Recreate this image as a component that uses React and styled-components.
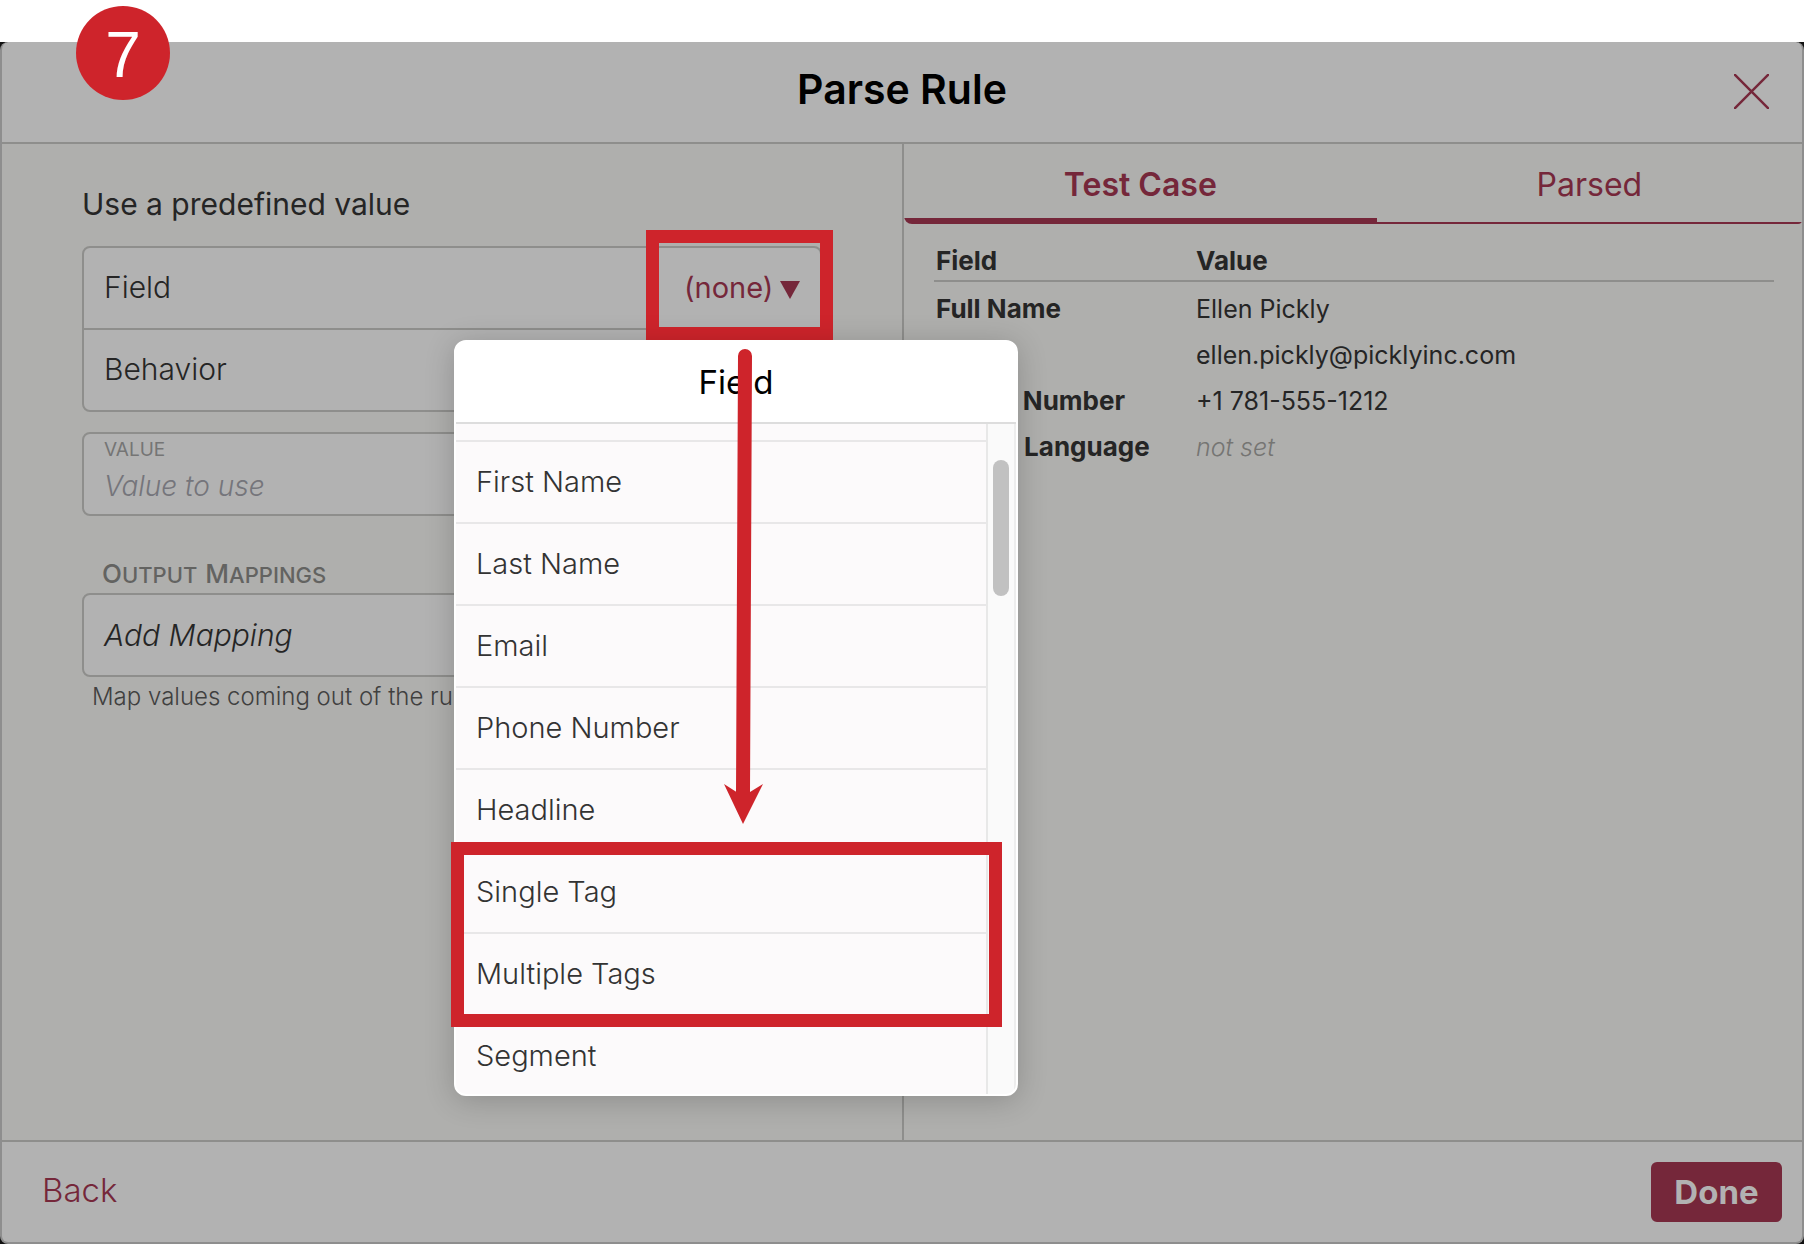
import React, { useState } from 'react'
import styled, { createGlobalStyle } from 'styled-components'

const GlobalStyle = createGlobalStyle`
  * {
    box-sizing: border-box;
  }
  body {
    margin: 0;
    background-color: white;
    color: #252525;
    font-family: Inter, "Open Sans", sans-serif;
    font-size: 29px;
  }
  button, input, select {
    font: inherit;
    color: inherit;
    margin: 0;
    padding: 0;
    border: none;
    background: none;
  }
  button {
    cursor: pointer;
  }
`

const Page = styled.div`
  position: relative;
  min-height: 100vh;
  padding-top: 42px;
  display: flex;
  flex-direction: column;
`

const Backdrop = styled.div`
  flex: 1;
  display: flex;
  background-color: #111;
`

const Dialog = styled.main`
  flex: 1;
  display: flex;
  flex-direction: column;
  border: 2px solid #8e8e8e;
  border-top: none;
  border-radius: 8px;
  background-color: #b2b2b2;
`

const Header = styled.header`
  height: 102px;
  padding: 0 33px 6px;
  display: grid;
  grid-template-columns: 1fr auto 1fr;
  align-items: center;
  border-bottom: 2px solid #8e8e8c;
`

const Title = styled.h1`
  grid-column: 2;
  margin: 0;
  font-size: 41px;
  font-weight: 600;
  color: black;
`

const CloseButton = styled.button`
  justify-self: end;
  display: flex;
  padding-top: 4px;
`

const Content = styled.div`
  flex: 1;
  display: grid;
  grid-template-columns: 1fr 1fr;
  background-color: #afafad;
`

const Left = styled.section`
  padding: 40px 80px;
`

const Right = styled.section`
  border-left: 2px solid #8e8e8c;
`

const GroupTitle = styled.h2`
  margin: 0 0 22px;
  font-size: 30px;
  line-height: 40px;
  font-weight: 400;
`

const Box = styled.div`
  margin-bottom: 20px;
  border: 2px solid #8e8e8c;
  border-radius: 8px;
  background-color: #b2b2b2;
`

const Row = styled.div`
  height: 80px;
  padding-left: 20px;
  display: flex;
  justify-content: space-between;
  align-items: stretch;
  font-size: 30px;
  font-weight: 300;

  & + & {
    height: 82px;
    border-top: 2px solid #8e8e8c;
  }
`

const RowLabel = styled.label`
  display: flex;
  align-items: center;
  padding-bottom: 2px;
`

const Picker = styled.div`
  position: relative;
  display: flex;
  align-items: center;
  gap: 8px;
  padding: 2px 20px 2px 26px;
  color: #75273a;
  font-size: 29px;
`

const PickerSelect = styled.select`
  width: 88px;
  appearance: none;
  font-weight: 400;
  line-height: 40px;
`

const Caret = styled.svg`
  margin-top: 4px;
`

const TextField = styled.div`
  height: 80px;
  padding: 4px 20px;
  display: flex;
  flex-direction: column;
  gap: 4px;
`

const TextFieldLabel = styled.label`
  font-size: 19px;
  line-height: 24px;
  color: #757575;
  text-transform: uppercase;
`

const TextInput = styled.input`
  height: 40px;
  width: 100%;
  font-size: 28px;
  font-weight: 300;

  &::placeholder {
    color: #75757b;
    font-style: italic;
    opacity: 1;
  }
`

const SectionTitle = styled.h3`
  margin: 42px 0 2px;
  padding-left: 20px;
  display: flex;
  gap: 8px;
  align-items: baseline;
  font-size: 22px;
  line-height: 32px;
  font-weight: 500;
  color: #636361;
  text-transform: uppercase;
`

const Word = styled.span`
  display: block;

  &::first-letter {
    font-size: 26px;
  }
`

const AddButton = styled.button`
  width: 100%;
  height: 80px;
  padding: 0 20px;
  display: block;
  text-align: left;
  font-size: 30px;
  font-style: italic;
  font-weight: 300;
`

const Help = styled.p`
  margin: -14px 0 0;
  padding-left: 10px;
  font-size: 24px;
  line-height: 28px;
  font-weight: 300;
  color: #40403f;
`

const Tabs = styled.div`
  display: flex;
  height: 80px;
  border-radius: 0 0 4px 8px;
  overflow: hidden;
`

const Tab = styled.button`
  flex: 1 1 auto;
  padding-top: ${(props) => (props.$active ? 6 : 2)}px;
  border-bottom: ${(props) => (props.$active ? 6 : 2)}px solid #75273a;
  color: #75273a;
  font-size: 32px;
  font-weight: ${(props) => (props.$active ? 600 : 400)};
`

const TableWrap = styled.div`
  padding: 0 28px 0 30px;
`

const Table = styled.table`
  width: 100%;
  border-collapse: separate;
  border-spacing: 0;
  table-layout: fixed;
  font-size: 25px;

  th, td {
    height: 46px;
    padding: 0 0 0 2px;
    line-height: 30px;
    text-align: left;
    white-space: nowrap;
  }
  th {
    font-size: 26px;
    font-weight: 700;
  }
  thead th {
    height: 58px;
    padding-bottom: 4px;
    vertical-align: bottom;
    border-bottom: 2px solid #8e8e8c;
  }
  th:first-child {
    width: 260px;
  }
  tbody::before {
    content: "";
    display: block;
    height: 4px;
  }
`

const NotSet = styled.i`
  font-weight: 300;
  color: #757573;
`

const Footer = styled.footer`
  height: 102px;
  padding: 0 20px 0 40px;
  display: flex;
  align-items: center;
  justify-content: space-between;
  border-top: 2px solid #8e8e8c;
`

const BackButton = styled.button`
  padding-bottom: 4px;
  font-size: 33px;
  font-weight: 300;
  color: #75273a;
`

const DoneButton = styled.button`
  width: 131px;
  height: 60px;
  border-radius: 6px;
  background-color: #75273a;
  color: #b2b2b2;
  font-size: 33px;
  font-weight: 700;
`

const Popover = styled.div`
  position: absolute;
  z-index: 1;
  top: calc(100% + 12px);
  right: -198px;
  width: 564px;
  border: 2px solid white;
  border-radius: 12px;
  background-color: white;
  box-shadow: 0 4px 30px rgba(0, 0, 0, 0.2);
  color: #333;
`

const PopoverTitle = styled.h2`
  margin: 0;
  height: 82px;
  line-height: 80px;
  border-bottom: 2px solid #ddd;
  color: black;
  font-size: 33px;
  font-weight: 400;
  text-align: center;
`

const Scroller = styled.div`
  height: 670px;
  display: flex;
  overflow: hidden;
  border-radius: 0 0 10px 10px;
`

const OptionList = styled.ul`
  flex: 1;
  margin: 0;
  padding: 16px 0 0;
  list-style: none;
  background-color: #fcfafb;
`

const Option = styled.li`
  height: 82px;
  padding-left: 20px;
  line-height: 80px;
  font-weight: 300;
  border-top: 2px solid #e8e7e8;
`

const ScrollTrack = styled.div`
  width: 30px;
  padding: 36px 5px;
  border-left: 2px solid #e8e8e8;
  border-right: 2px solid #ededed;
  background-color: #fafafa;
`

const ScrollThumb = styled.div`
  height: 136px;
  border-radius: 8px;
  background-color: #c1c1c1;
`

// annotations drawn over the dialog
const Highlight = styled.div`
  position: absolute;
  border: 13px solid #ce242b;
  pointer-events: none;
`

const PickerHighlight = styled(Highlight)`
  inset: -18px -13px -12px -12px;
`

const TagsHighlight = styled(Highlight)`
  top: 500px;
  right: 14px;
  left: -5px;
  height: 185px;
`

const Arrow = styled.svg`
  position: absolute;
  top: 6px;
  left: 268px;
  pointer-events: none;
`

const Step = styled.div`
  position: absolute;
  z-index: 2;
  top: 6px;
  left: 76px;
  width: 94px;
  height: 94px;
  border-radius: 50%;
  background-color: #ce242b;
  color: white;
  font-family: "Liberation Sans", Arial, sans-serif;
  font-size: 64px;
  line-height: 98px;
  text-align: center;
`

const fields = [
  'First Name',
  'Last Name',
  'Email',
  'Phone Number',
  'Headline',
  'Single Tag',
  'Multiple Tags',
  'Segment',
]

const testCase = [
  { field: 'Full Name', value: 'Ellen Pickly' },
  { field: 'Email', value: 'ellen.pickly@picklyinc.com' },
  { field: 'Phone Number', value: '+1 781-555-1212' },
  { field: 'Target Language', value: null },
]

const FieldPopover = ({ onPick }) => {
  return (
    <Popover>
      <PopoverTitle>Field</PopoverTitle>
      <Scroller>
        <OptionList role="listbox" aria-label="Field">
          {fields.map((name) => (
            <Option key={name} role="option" onClick={() => onPick(name)}>{name}</Option>
          ))}
        </OptionList>
        <ScrollTrack>
          <ScrollThumb />
        </ScrollTrack>
      </Scroller>
      <TagsHighlight />
      <Arrow width="40" height="478" viewBox="0 0 40 478">
        <path d="M21 8 L19 446" stroke="#ce242b" strokeWidth="14" strokeLinecap="round" />
        <path d="M0 436 L12.500 444 H26 L39 436 L19 476 Z" fill="#ce242b" />
      </Arrow>
    </Popover>
  )
}

const App = () => {
  const [tab, setTab] = useState('Test Case')
  const [field, setField] = useState('')

  return (
    <Page>
      <GlobalStyle />
      <Step>7</Step>
      <Backdrop>
        <Dialog>
          <Header>
            <Title>Parse Rule</Title>
            <CloseButton aria-label="Close">
              <svg width="35" height="35" viewBox="0 0 36 36" stroke="#75273a" strokeWidth="2.500" strokeLinecap="round">
                <path d="M1 1 L35 35 M35 1 L1 35" />
              </svg>
            </CloseButton>
          </Header>
          <Content>
            <Left>
              <GroupTitle>Use a predefined value</GroupTitle>
              <Box>
                <Row>
                  <RowLabel htmlFor="field">Field</RowLabel>
                  <Picker>
                    <PickerSelect id="field" value={field} onChange={(e) => setField(e.target.value)}>
                      <option value="">(none)</option>
                      {fields.map((name) => (
                        <option key={name} value={name}>{name}</option>
                      ))}
                    </PickerSelect>
                    <Caret width="20" height="18" viewBox="0 0 20 18">
                      <path d="M0 0 H20 L10 18 Z" fill="#75273a" />
                    </Caret>
                    <PickerHighlight />
                    <FieldPopover onPick={setField} />
                  </Picker>
                </Row>
                <Row>
                  <RowLabel as="span">Behavior</RowLabel>
                </Row>
              </Box>
              <Box>
                <TextField>
                  <TextFieldLabel htmlFor="value">Value</TextFieldLabel>
                  <TextInput id="value" type="text" placeholder="Value to use" />
                </TextField>
              </Box>
              <SectionTitle>
                <Word>Output</Word>
                <Word>Mappings</Word>
              </SectionTitle>
              <Box>
                <AddButton>Add Mapping</AddButton>
              </Box>
              <Help>Map values coming out of the rule</Help>
            </Left>
            <Right>
              <Tabs role="tablist">
                {['Test Case', 'Parsed'].map((name) => (
                  <Tab
                    key={name}
                    role="tab"
                    aria-selected={tab === name}
                    $active={tab === name}
                    onClick={() => setTab(name)}
                  >
                    {name}
                  </Tab>
                ))}
              </Tabs>
              <TableWrap>
                <Table>
                  <thead>
                    <tr>
                      <th scope="col">Field</th>
                      <th scope="col">Value</th>
                    </tr>
                  </thead>
                  <tbody>
                    {testCase.map((row) => (
                      <tr key={row.field}>
                        <th scope="row">{row.field}</th>
                        <td>{row.value || <NotSet>not set</NotSet>}</td>
                      </tr>
                    ))}
                  </tbody>
                </Table>
              </TableWrap>
            </Right>
          </Content>
          <Footer>
            <BackButton>Back</BackButton>
            <DoneButton>Done</DoneButton>
          </Footer>
        </Dialog>
      </Backdrop>
    </Page>
  )
}

export default App
